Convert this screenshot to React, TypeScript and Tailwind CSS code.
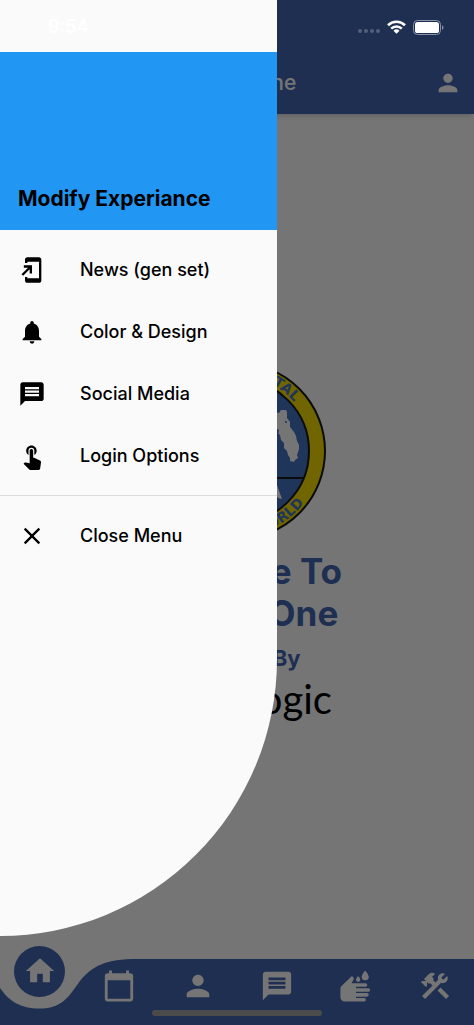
import React from "react";
import type { IconType } from "react-icons";
import {
  MdAddToHomeScreen,
  MdCalendarToday,
  MdClose,
  MdConstruction,
  MdHome,
  MdMessage,
  MdNotifications,
  MdPerson,
  MdTouchApp,
  MdWash,
} from "react-icons/md";

const menuItems: { label: string; Icon: IconType }[] = [
  { label: "News (gen set)", Icon: MdAddToHomeScreen },
  { label: "Color & Design", Icon: MdNotifications },
  { label: "Social Media", Icon: MdMessage },
  { label: "Login Options", Icon: MdTouchApp },
];

const tabs: { label: string; Icon: IconType }[] = [
  { label: "Calendar", Icon: MdCalendarToday },
  { label: "Members", Icon: MdPerson },
  { label: "Messages", Icon: MdMessage },
  { label: "Service", Icon: MdWash },
  { label: "Tools", Icon: MdConstruction },
];

function MenuRow({ label, Icon }: { label: string; Icon: IconType }) {
  return (
    <li>
      <button type="button" className="flex h-[62px] w-full items-center gap-[34px] pl-[18px] text-left">
        <Icon className="size-7 shrink-0" aria-hidden="true" />
        <span className="text-lg font-medium">{label}</span>
      </button>
    </li>
  );
}

function Seal() {
  return (
    <svg viewBox="-89 -89 178 178" className="size-[178px]" role="img" aria-label="Seal">
      <circle r="88" fill="#f5dc00" stroke="#1a1a1a" strokeWidth="2" />
      <circle r="72" fill="#4573c4" stroke="#1a1a1a" strokeWidth="2" />
      <path d="M-67 27H67" stroke="#1a1a1a" strokeWidth="2" />
      <path
        d="M-24-38 10-37 32-39 38-39 42-38 44-41 49-41 50-39 50-33 53-29 53-24 57-19 59-15 60-10 62-6 62-2 60 4 61 7 58 9 57 11 53 10 53 7 51 4 50 0 47-3 47-8 44-11 43-16 40-19 36-22 30-25 24-28-20-30Z"
        fill="#fff"
      />
      <path d="M36 34 40 34 45 48 41 47 38 42Z" fill="#fff" />
      <circle cx="49" cy="-29" r="1" fill="#4573c4" />
      <path d="M39-23 42-21 41-16 39-18Z" fill="#4573c4" />
      <path id="seal-top" d="M-75 0A75 75 0 0 1 57-49" fill="none" />
      <path id="seal-bottom" d="M-85 0A85 85 0 0 0 67 52" fill="none" />
      <g fill="#4573c4" className="font-['DejaVu_Sans',sans-serif] text-[14px] font-bold">
        <text textAnchor="end">
          <textPath href="#seal-top" startOffset="100%">CONTINENTAL</textPath>
        </text>
        <text textAnchor="end">
          <textPath href="#seal-bottom" startOffset="100%">WORLD</textPath>
        </text>
      </g>
    </svg>
  );
}

function StatusBar() {
  return (
    <div className="pointer-events-none absolute inset-x-0 top-0 flex h-[54px] items-center justify-between pr-[30px] pl-12 text-white">
      <span className="text-lg font-semibold">9:54</span>
      <div className="flex items-center gap-[7px]">
        <svg viewBox="0 0 22 4" className="mt-2 h-1 w-[22px] fill-[#536079]" aria-hidden="true">
          <circle cx="2" cy="2" r="2" />
          <circle cx="8" cy="2" r="2" />
          <circle cx="14" cy="2" r="2" />
          <circle cx="20" cy="2" r="2" />
        </svg>
        <svg viewBox="0 0 19 14" className="h-[14px] w-[19px]" fill="none" stroke="currentColor" strokeWidth="2.6" aria-hidden="true">
          <path d="M1 5.2a12.2 12.2 0 0 1 17 0" />
          <path d="M4.2 8.6a7.6 7.6 0 0 1 10.6 0" />
          <path d="M9.5 13.8 6.5 10.8a4.3 4.3 0 0 1 6 0Z" fill="currentColor" stroke="none" />
        </svg>
        <svg viewBox="0 0 31 15" className="h-[15px] w-[31px]" aria-hidden="true">
          <rect x="0.5" y="0.5" width="27" height="14" rx="4" fill="none" stroke="#8791a8" />
          <rect x="2" y="2" width="24" height="11" rx="2.6" fill="#fff" />
          <path d="M29 5.2c2 .8 2 3.8 0 4.6Z" fill="#8791a8" />
        </svg>
      </div>
    </div>
  );
}

function BottomNav() {
  return (
    <nav className="relative h-[66px] text-white">
      <svg viewBox="0 0 474 66" preserveAspectRatio="none" className="absolute inset-0 size-full" aria-hidden="true">
        <path d="M0 29C9 42 20 49.500 40 49.500C61 49.500 68 39 80 22C92 7 106 0 137 0H474V66H0Z" fill="#4366b2" />
      </svg>
      <div className="relative grid grid-cols-6 grid-rows-[54px] items-center justify-items-center">
        <a
          href="#home"
          aria-label="Home"
          className="mb-[30px] flex size-[51px] items-center justify-center rounded-full bg-[#4366b2]"
        >
          <MdHome className="size-[34px]" />
        </a>
        {tabs.map(({ label, Icon }) => (
          <a key={label} href={`#${label.toLowerCase()}`} aria-label={label}>
            <Icon className="size-[34px]" />
          </a>
        ))}
      </div>
    </nav>
  );
}

export default function App() {
  return (
    <div className="relative flex min-h-screen flex-col overflow-hidden bg-white font-['Inter',sans-serif]">
      <header className="flex h-[114px] items-center bg-[#4366b2] px-3 pt-[52px] text-white shadow-md">
        <div className="w-7" />
        <h1 className="flex-1 text-center text-[21px] font-medium">District One</h1>
        <button type="button" aria-label="Profile">
          <MdPerson className="size-7" />
        </button>
      </header>

      <main className="flex flex-1 flex-col items-center justify-center pt-3 text-center text-[#4366b2]">
        <Seal />
        <h2 className="mt-[10px] text-[35px] leading-[42px] font-bold">
          Welcome To
          <br />
          District One
        </h2>
        <p className="mt-2 text-[22px] leading-8 font-bold">Powered By</p>
        <p className="font-['Lato',sans-serif] text-[40px] leading-[50px] text-black">Metrologic</p>
      </main>

      <BottomNav />

      <div className="absolute inset-0 bg-black/54" />

      <aside className="absolute top-0 bottom-[89px] left-0 w-[277px] overflow-hidden rounded-br-[277px] bg-[#fafafa] pt-[52px] text-black">
        <div className="flex h-[178px] items-end bg-[#2196f3] px-[18px] pb-4">
          <h2 className="text-[21px] leading-[30px] font-bold">Modify Experiance</h2>
        </div>
        <ul className="border-b border-[#dcdcdc] pt-[9px] pb-2">
          {menuItems.map((item) => (
            <MenuRow key={item.label} {...item} />
          ))}
        </ul>
        <ul className="pt-[9px]">
          <MenuRow label="Close Menu" Icon={MdClose} />
        </ul>
      </aside>

      <StatusBar />
      <div className="pointer-events-none absolute inset-x-0 bottom-[9px] flex justify-center">
        <div className="h-[6px] w-[170px] rounded-full bg-[#4b4b4b]" />
      </div>
    </div>
  );
}
